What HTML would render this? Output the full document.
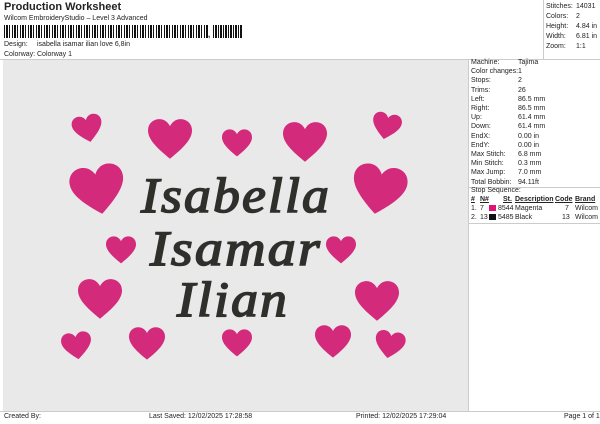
<!DOCTYPE html>
<html><head><meta charset="utf-8"><style>
*{margin:0;padding:0;box-sizing:border-box}
body{width:600px;height:424px;background:#fff;font-family:"Liberation Sans",Arial,sans-serif;color:#222;position:relative;overflow:hidden;font-size:7px}
.a{position:absolute;white-space:nowrap}
.r{position:absolute;left:471px;font-size:7px}
.v{position:absolute;left:518px;font-size:7px}
</style></head><body>
<div class="a" style="left:4px;top:1px;font-size:11px;font-weight:bold">Production Worksheet</div>
<div class="a" style="left:4px;top:15px;font-size:7px">Wilcom EmbroideryStudio – Level 3 Advanced</div>
<div class="a" style="left:4px;top:25px;width:205px;height:13px;background:repeating-linear-gradient(90deg,#111 0 1px,#fff 1px 2px,#111 2px 4px,#fff 4px 5px,#111 5px 6px,#fff 6px 8px)"></div>
<div class="a" style="left:208px;top:30px;font-size:8px;font-weight:bold">,</div>
<div class="a" style="left:213px;top:25px;width:29px;height:13px;background:repeating-linear-gradient(90deg,#111 0 1px,#fff 1px 2px,#111 2px 4px,#fff 4px 5px)"></div>
<div class="a" style="left:4px;top:41px">Design:</div><div class="a" style="left:37px;top:41px">isabella isamar ilian love 6,8in</div>
<div class="a" style="left:4px;top:51px">Colorway:</div><div class="a" style="left:37px;top:51px">Colorway 1</div>
<div class="a" style="left:0;top:59px;width:600px;height:1px;background:#ccc"></div>
<div class="a" style="left:543px;top:0;width:1px;height:59px;background:#ccc"></div>
<div class="a" style="left:546px;top:3px">Stitches:</div><div class="a" style="left:576px;top:3px">14031</div>
<div class="a" style="left:546px;top:13px">Colors:</div><div class="a" style="left:576px;top:13px">2</div>
<div class="a" style="left:546px;top:23px">Height:</div><div class="a" style="left:576px;top:23px">4.84 in</div>
<div class="a" style="left:546px;top:33px">Width:</div><div class="a" style="left:576px;top:33px">6.81 in</div>
<div class="a" style="left:546px;top:43px">Zoom:</div><div class="a" style="left:576px;top:43px">1:1</div>
<svg class="a" style="left:3px;top:60px" width="465" height="351" viewBox="3 60 465 351">
<rect x="3" y="60" width="465" height="351" fill="#e9e9e9"/>
<defs><path id="h" d="M0 44 C-15 32 -25 22 -25 12 C-25 4 -19 -1 -12 -1 C-6 -1 -2 3 0 7 C2 3 6 -1 12 -1 C19 -1 25 4 25 12 C25 22 15 32 0 44Z"/></defs>
<g fill="#d42a7c">
<use href="#h" transform="translate(85,116) scale(0.6) rotate(-12)"/>
<use href="#h" transform="translate(170,120) scale(0.88)"/>
<use href="#h" transform="translate(237,130) scale(0.6)"/>
<use href="#h" transform="translate(305,123) scale(0.88)"/>
<use href="#h" transform="translate(389,114) scale(0.58) rotate(12)"/>
<use href="#h" transform="translate(94,167) scale(1.08) rotate(-10)"/>
<use href="#h" transform="translate(383,167) scale(1.08) rotate(10)"/>
<use href="#h" transform="translate(121,237) scale(0.6)"/>
<use href="#h" transform="translate(341,237) scale(0.6)"/>
<use href="#h" transform="translate(100,280) scale(0.88)"/>
<use href="#h" transform="translate(377,282) scale(0.88)"/>
<use href="#h" transform="translate(75,333) scale(0.6) rotate(-8)"/>
<use href="#h" transform="translate(147,328) scale(0.72)"/>
<use href="#h" transform="translate(237,330) scale(0.6)"/>
<use href="#h" transform="translate(333,326) scale(0.72)"/>
<use href="#h" transform="translate(392,332) scale(0.6) rotate(10)"/>
</g>
<g fill="#2f2f2c" stroke="#2f2f2c" stroke-width="1.6" font-family="Liberation Serif,serif" font-style="italic" font-size="50" text-anchor="middle" letter-spacing="2">
<text x="236" y="212" textLength="190" lengthAdjust="spacingAndGlyphs">Isabella</text>
<text x="236" y="265" textLength="172" lengthAdjust="spacingAndGlyphs">Isamar</text>
<text x="233" y="316" textLength="112" lengthAdjust="spacingAndGlyphs">Ilian</text>
</g>
</svg>
<div class="a" style="left:468px;top:60px;width:1px;height:351px;background:#ccc"></div>
<div class="r" style="top:59px">Machine:</div><div class="v" style="top:59px">Tajima</div>
<div class="r" style="top:68.2px">Color changes:</div><div class="v" style="top:68.2px">1</div>
<div class="r" style="top:77.4px">Stops:</div><div class="v" style="top:77.4px">2</div>
<div class="r" style="top:86.6px">Trims:</div><div class="v" style="top:86.6px">26</div>
<div class="r" style="top:95.8px">Left:</div><div class="v" style="top:95.8px">86.5 mm</div>
<div class="r" style="top:105px">Right:</div><div class="v" style="top:105px">86.5 mm</div>
<div class="r" style="top:114.2px">Up:</div><div class="v" style="top:114.2px">61.4 mm</div>
<div class="r" style="top:123.4px">Down:</div><div class="v" style="top:123.4px">61.4 mm</div>
<div class="r" style="top:132.6px">EndX:</div><div class="v" style="top:132.6px">0.00 in</div>
<div class="r" style="top:141.8px">EndY:</div><div class="v" style="top:141.8px">0.00 in</div>
<div class="r" style="top:151px">Max Stitch:</div><div class="v" style="top:151px">6.8 mm</div>
<div class="r" style="top:160.2px">Min Stitch:</div><div class="v" style="top:160.2px">0.3 mm</div>
<div class="r" style="top:169.4px">Max Jump:</div><div class="v" style="top:169.4px">7.0 mm</div>
<div class="r" style="top:178.6px">Total Bobbin:</div><div class="v" style="top:178.6px">94.11ft</div>
<div class="a" style="left:469px;top:187px;width:131px;height:1px;background:#ccc"></div>
<div class="r" style="top:187px">Stop Sequence:</div>
<div class="a" style="left:471px;top:196px;font-weight:bold;text-decoration:underline">#</div>
<div class="a" style="left:480px;top:196px;font-weight:bold;text-decoration:underline">N#</div>
<div class="a" style="left:503px;top:196px;font-weight:bold;text-decoration:underline">St.</div>
<div class="a" style="left:515px;top:196px;font-weight:bold;text-decoration:underline">Description</div>
<div class="a" style="left:555px;top:196px;font-weight:bold;text-decoration:underline">Code</div>
<div class="a" style="left:575px;top:196px;font-weight:bold;text-decoration:underline">Brand</div>
<div class="a" style="left:471px;top:205px">1.</div><div class="a" style="left:480px;top:205px">7</div>
<div class="a" style="left:489px;top:205px;width:7px;height:6px;background:#e0127a"></div>
<div class="a" style="left:498px;top:205px">8544</div><div class="a" style="left:515px;top:205px">Magenta</div>
<div class="a" style="left:565px;top:205px">7</div><div class="a" style="left:575px;top:205px">Wilcom</div>
<div class="a" style="left:471px;top:214px">2.</div><div class="a" style="left:480px;top:214px">13</div>
<div class="a" style="left:489px;top:214px;width:7px;height:6px;background:#111"></div>
<div class="a" style="left:498px;top:214px">5485</div><div class="a" style="left:515px;top:214px">Black</div>
<div class="a" style="left:562px;top:214px">13</div><div class="a" style="left:575px;top:214px">Wilcom</div>
<div class="a" style="left:469px;top:223px;width:131px;height:1px;background:#ccc"></div>
<div class="a" style="left:0;top:411px;width:600px;height:1px;background:#ccc"></div>
<div class="a" style="left:4px;top:413px">Created By:</div>
<div class="a" style="left:149px;top:413px">Last Saved: 12/02/2025 17:28:58</div>
<div class="a" style="left:356px;top:413px">Printed: 12/02/2025 17:29:04</div>
<div class="a" style="left:564px;top:413px">Page 1 of 1</div>
</body></html>
